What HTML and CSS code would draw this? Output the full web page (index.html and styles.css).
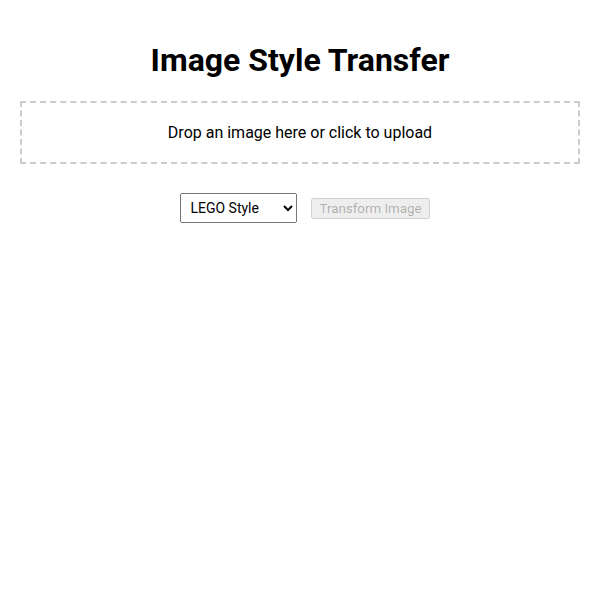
FILE: index.html
```html
<!DOCTYPE html>
<html>
<head>
<meta charset="utf-8">
<link rel="stylesheet" href="styles.css">
</head>
<body>
<h1 class="title">Image Style Transfer</h1>
<div class="dropzone">Drop an image here or click to upload</div>
<div class="controls">
  <select class="style-select">
    <option>LEGO Style</option>
    <option>Anime Style</option>
    <option>Pixel Art Style</option>
  </select>
  <button class="transform-btn" disabled>Transform Image</button>
</div>
</body>
</html>
```
FILE: styles.css
```css
body {
  margin: 0;
  padding: 20px;
  font-family: Roboto, "Liberation Sans", sans-serif;
  background: #fff;
  color: #000;
}
.title {
  text-align: center;
  font-size: 32px;
  font-weight: 700;
  margin: 21.44px 0;
}
.dropzone {
  border: 2px dashed #ccc;
  padding: 20px;
  text-align: center;
  font-size: 16px;
}
.controls {
  margin: 19px 0 20px;
  text-align: center;
}
.style-select {
  font-family: Roboto, "Liberation Sans", sans-serif;
  font-size: 14px;
  padding: 5px;
  margin: 10px;
  width: 117px;
}
.transform-btn {
  font-family: Roboto, "Liberation Sans", sans-serif;
  font-size: 13.33px;
  padding: 1px 6px;
  margin: 10px 0;
}
```
